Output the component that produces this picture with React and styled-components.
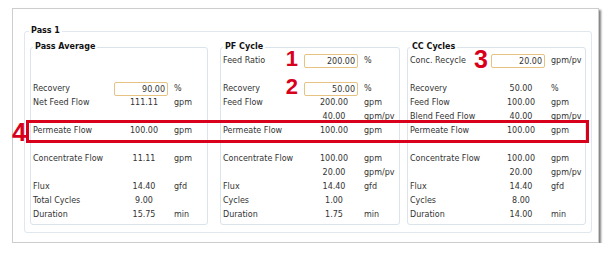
import React from "react";
import styled, { createGlobalStyle } from "styled-components";

const GlobalStyle = createGlobalStyle`
  html, body {
    margin: 0;
    padding: 0;
    background: #ffffff;
  }
  body {
    font-family: "DejaVu Sans", Verdana, sans-serif;
  }
`;

const Page = styled.div`
  padding: 8px 0 0 12px;
`;

const Window = styled.div`
  position: relative;
  width: 587px;
  box-sizing: border-box;
  padding: 17px 6px 9px 11px;
  background: #ffffff;
  border: 1px solid #cdcdcd;
  box-shadow: 2px 2px 2px rgba(0, 0, 0, 0.5);
`;

const PassSet = styled.fieldset`
  margin: 0;
  padding: 6px 4px 7px 5px;
  border: 1px solid #e0e7ee;
  border-radius: 3px;
  display: flex;
  min-width: 0;
`;

const Legend = styled.legend`
  padding: 0 2px;
  margin-left: ${({ $shift }) => $shift || 0}px;
  font-size: 8px;
  font-weight: bold;
  line-height: 10px;
  color: #111111;
`;

const Section = styled.fieldset`
  margin: 0 0 0 ${({ $gap }) => $gap}px;
  width: ${({ $width }) => $width}px;
  box-sizing: border-box;
  padding: 2px 2px 2px 2px;
  border: 1px solid #dbe3eb;
  border-radius: 3px;
  min-width: 0;
`;

const Grid = styled.div`
  display: grid;
  grid-template-columns: 75px 54px 1fr;
  grid-auto-rows: 14px;
  column-gap: 6px;
  font-size: 8px;
  line-height: 14px;
  color: #333333;
  white-space: nowrap;
`;

const Label = styled.span``;

const Value = styled.span`
  text-align: center;
  padding-left: 6px;
`;

const Unit = styled.span``;

const Blank = styled.span`
  grid-column: 1 / -1;
`;

const InputCell = styled.span`
  position: relative;
  display: flex;
  align-items: center;
`;

const Field = styled.input`
  width: 54px;
  height: 14px;
  box-sizing: border-box;
  margin: 0;
  padding: 0 2px;
  border: 1px solid #e6c283;
  border-radius: 2px;
  background: #ffffff;
  font-family: "DejaVu Sans", Verdana, sans-serif;
  font-size: 8px;
  color: #333333;
  text-align: right;
  outline: none;
`;

const Mark = styled.span`
  position: absolute;
  right: calc(100% + ${({ $gap }) => $gap}px);
  top: ${({ $top }) => $top}px;
  font-family: "Liberation Sans", Arial, sans-serif;
  font-weight: bold;
  font-size: ${({ $size }) => $size}px;
  line-height: 1;
  color: #d9001b;
`;

const Highlight = styled.div`
  position: absolute;
  left: 13px;
  top: 111px;
  width: 563px;
  height: 23px;
  box-sizing: border-box;
  border: 3px solid #d9001b;
  pointer-events: none;
`;

const SideMark = styled(Mark)`
  right: auto;
  left: -1px;
`;

const sections = [
  {
    title: "Pass Average",
    gap: 0,
    width: 178,
    rows: [
      null,
      null,
      { label: "Recovery", input: "90.00", unit: "%" },
      { label: "Net Feed Flow", value: "111.11", unit: "gpm" },
      null,
      { label: "Permeate Flow", value: "100.00", unit: "gpm" },
      null,
      { label: "Concentrate Flow", value: "11.11", unit: "gpm" },
      null,
      { label: "Flux", value: "14.40", unit: "gfd" },
      { label: "Total Cycles", value: "9.00", unit: "" },
      { label: "Duration", value: "15.75", unit: "min" },
    ],
  },
  {
    title: "PF Cycle",
    gap: 12,
    width: 180,
    rows: [
      { label: "Feed Ratio", input: "200.00", unit: "%", mark: { n: "1", size: 22, gap: 6, top: -6 } },
      null,
      { label: "Recovery", input: "50.00", unit: "%", mark: { n: "2", size: 22, gap: 6, top: -6 } },
      { label: "Feed Flow", value: "200.00", unit: "gpm" },
      { label: "", value: "40.00", unit: "gpm/pv" },
      { label: "Permeate Flow", value: "100.00", unit: "gpm" },
      null,
      { label: "Concentrate Flow", value: "100.00", unit: "gpm" },
      { label: "", value: "20.00", unit: "gpm/pv" },
      { label: "Flux", value: "14.40", unit: "gfd" },
      { label: "Cycles", value: "1.00", unit: "" },
      { label: "Duration", value: "1.75", unit: "min" },
    ],
  },
  {
    title: "CC Cycles",
    gap: 7,
    width: 179,
    rows: [
      { label: "Conc. Recycle", input: "20.00", unit: "gpm/pv", mark: { n: "3", size: 25, gap: 3, top: -7 } },
      null,
      { label: "Recovery", value: "50.00", unit: "%" },
      { label: "Feed Flow", value: "100.00", unit: "gpm" },
      { label: "Blend Feed Flow", value: "40.00", unit: "gpm/pv" },
      { label: "Permeate Flow", value: "100.00", unit: "gpm" },
      null,
      { label: "Concentrate Flow", value: "100.00", unit: "gpm" },
      { label: "", value: "20.00", unit: "gpm/pv" },
      { label: "Flux", value: "14.40", unit: "gfd" },
      { label: "Cycles", value: "8.00", unit: "" },
      { label: "Duration", value: "14.00", unit: "min" },
    ],
  },
];

const Row = ({ row }) => {
  if (!row) return <Blank />;
  return (
    <>
      <Label>{row.label}</Label>
      {row.input ? (
        <InputCell>
          {row.mark && (
            <Mark $size={row.mark.size} $gap={row.mark.gap} $top={row.mark.top}>
              {row.mark.n}
            </Mark>
          )}
          <Field readOnly tabIndex={-1} defaultValue={row.input} />
        </InputCell>
      ) : (
        <Value>{row.value}</Value>
      )}
      <Unit>{row.unit}</Unit>
    </>
  );
};

export default function App() {
  return (
    <>
      <GlobalStyle />
      <Page>
        <Window>
          <PassSet>
            <Legend $shift={-1}>Pass 1</Legend>
            {sections.map((s) => (
              <Section key={s.title} $gap={s.gap} $width={s.width}>
                <Legend>{s.title}</Legend>
                <Grid>
                  {s.rows.map((row, i) => (
                    <Row key={i} row={row} />
                  ))}
                </Grid>
              </Section>
            ))}
          </PassSet>
          <Highlight />
          <SideMark $size={26} $gap={0} $top={110}>
            4
          </SideMark>
        </Window>
      </Page>
    </>
  );
}
